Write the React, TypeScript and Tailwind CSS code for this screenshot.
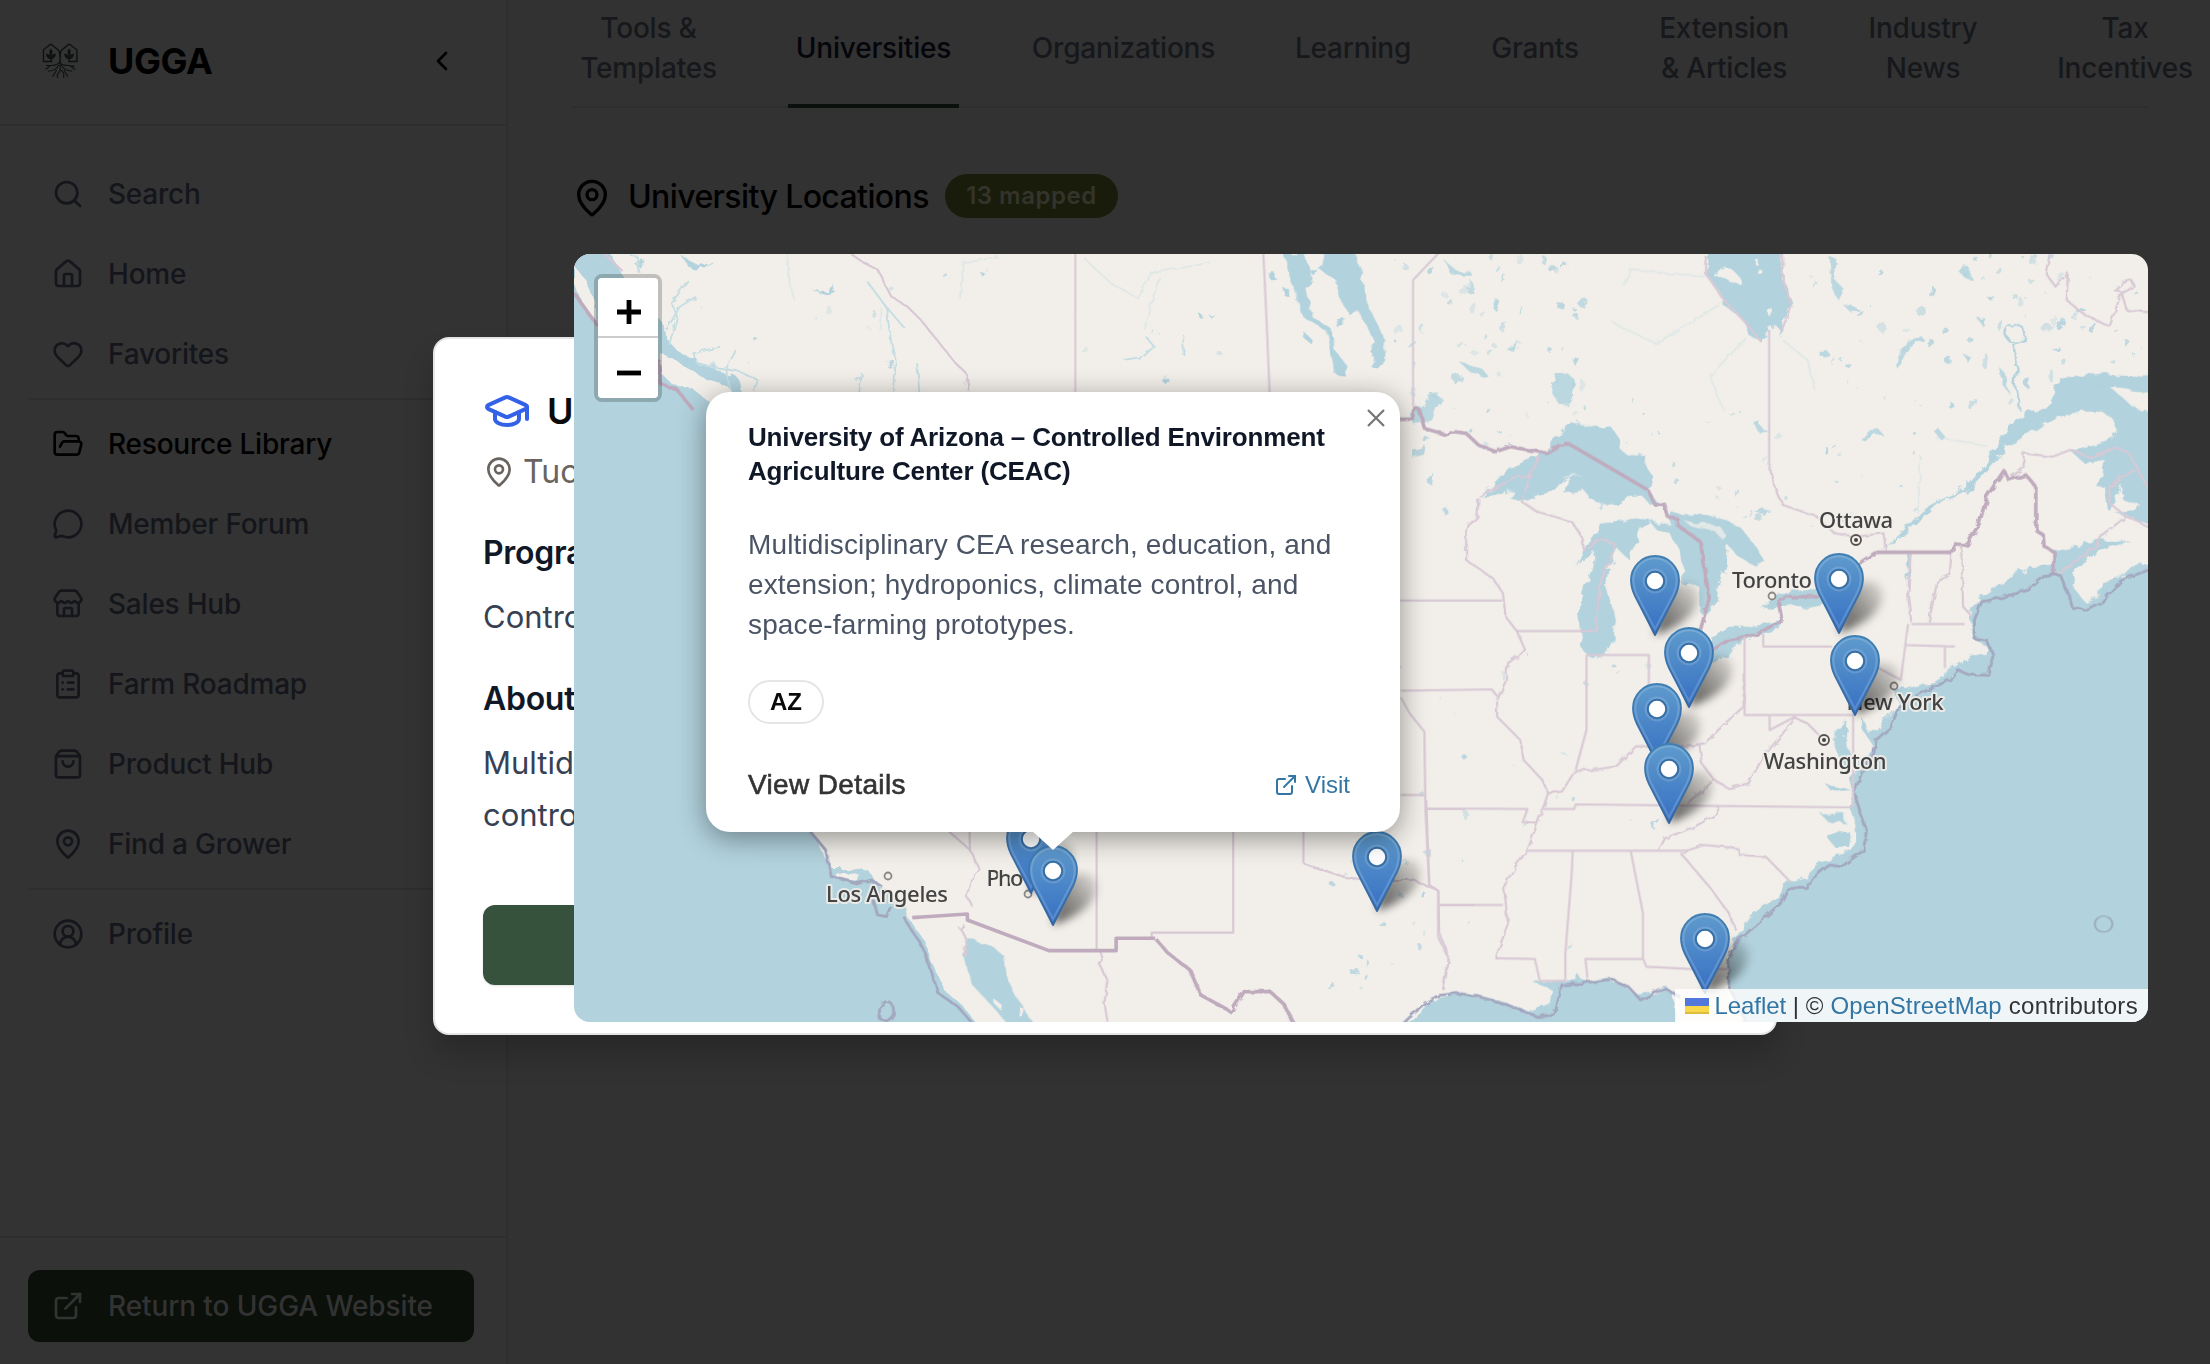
import type { ComponentType, ReactNode } from "react";
import {
  ChevronLeft, CircleUserRound, ClipboardList, ExternalLink, FolderOpen, GraduationCap,
  Heart, House, MapPin, MessageCircle, Search, ShoppingBag, Store,
} from "lucide-react";

type Icon = ComponentType<{ className?: string; strokeWidth?: number }>;

function NavItem({ icon: I, label, active }: { icon: Icon; label: string; active?: boolean }) {
  return (
    <a className={`flex h-[72px] items-center gap-6 rounded-xl pl-6 text-[28px] font-medium tracking-[-0.22px] ${active ? "text-black" : "text-[#14161b]"}`}>
      <I className="size-8 shrink-0" />
      <span>{label}</span>
    </a>
  );
}

function Logo() {
  return (
    <svg viewBox="117 130 101 107" preserveAspectRatio="none" className="h-9 w-9 shrink-0 text-[#0c120e]" fill="none" stroke="currentColor" strokeWidth="3.8">
      <path d="M146 185H121V150L142 133L164 152Q168 160 168 190M191 185H215V150L193 133L171 152Q168 158 168 172" />
      <path d="M142 146q-9 10 0 22q9-12 0-22M193 146q-9 10 0 22q9-12 0-22M128 162q12-1 14 13q2-14 14-13q-2 16-14 16q-12 0-14-16M179 162q12-1 14 13q2-14 14-13q-2 16-14 16q-12 0-14-16" fill="currentColor" stroke="none" />
      <path d="M142 160V185M193 160V185" />
      <path d="M167 185Q160 198 140 197L127 209M168 190Q176 198 196 197L210 210M168 188V212L160 224V234M168 208L178 220V234M164 195Q158 212 134 214M171 195Q178 212 202 214M158 210L147 230M178 210L190 230M145 197L128 197M190 197L209 199" strokeWidth="3" />
    </svg>
  );
}

function Sidebar() {
  return (
    <aside className="flex h-full w-[508px] shrink-0 flex-col border-r-2 border-[#2e2e2e] bg-[#333333]">
      <div className="flex h-[126px] items-center border-b-2 border-[#2e2e2e] pl-[42px] pr-12 pb-0.5">
        <Logo />
        <span className="ml-[30px] grow text-[36px] font-bold tracking-[-0.4px] text-black">UGGA</span>
        <ChevronLeft className="size-8 text-black" />
      </div>
      <nav className="flex grow flex-col gap-2 px-7 pt-8">
        <NavItem icon={Search} label="Search" />
        <NavItem icon={House} label="Home" />
        <NavItem icon={Heart} label="Favorites" />
        <div className="h-0.5 bg-[#2e2e2e]" />
        <NavItem icon={FolderOpen} label="Resource Library" active />
        <NavItem icon={MessageCircle} label="Member Forum" />
        <NavItem icon={Store} label="Sales Hub" />
        <NavItem icon={ClipboardList} label="Farm Roadmap" />
        <NavItem icon={ShoppingBag} label="Product Hub" />
        <NavItem icon={MapPin} label="Find a Grower" />
        <div className="h-0.5 bg-[#2e2e2e]" />
        <NavItem icon={CircleUserRound} label="Profile" />
      </nav>
      <div className="h-[128px] border-t-2 border-[#2e2e2e] px-7 pt-8">
        <a className="flex h-[72px] w-[446px] items-center gap-6 rounded-xl bg-[#0b100b] pl-6 text-[28px] font-medium tracking-[-0.1px] text-[#333333]">
          <ExternalLink className="size-8" />
          <span>Return to UGGA Website</span>
        </a>
      </div>
    </aside>
  );
}

const tabs = [
  { lines: ["Tools &", "Templates"], box: "w-[149px]" },
  { lines: ["Universities"], box: "w-[171px]", active: true },
  { lines: ["Organizations"], box: "w-[199px]" },
  { lines: ["Learning"], box: "w-[130px]" },
  { lines: ["Grants"], box: "w-[104px]" },
  { lines: ["Extension", "& Articles"], box: "w-[144px]" },
  { lines: ["Industry", "News"], box: "w-[124px]" },
  { lines: ["Tax", "Incentives"], box: "w-[150px]" },
];

function Tabs() {
  return (
    <div className="flex h-[108px] w-[1576px] gap-[65px] border-b-2 border-[#2e2e2e] pl-0.5">
      {tabs.map((t) => (
        <div key={t.lines[0]} className={`flex h-[108px] shrink-0 flex-col items-center justify-center whitespace-nowrap border-b-4 pb-2 text-[28px] font-medium leading-10 tracking-[-0.2px] ${t.box} ${t.active ? "border-[#0a110d] text-[#04060b]" : "border-transparent text-[#16181c]"}`}>
          {t.lines.map((l) => <span key={l}>{l}</span>)}
        </div>
      ))}
    </div>
  );
}

/* ---------- Map ---------- */

const water = "#b2d2dd";
const land = "#f2efea";

/** Small lakes scattered pseudo-randomly inside a rectangle. */
function Lakes({ x, y, w, h, n, seed, size = 4 }: { x: number; y: number; w: number; h: number; n: number; seed: number; size?: number }) {
  let s = seed;
  const r = () => (s = (s * 16807) % 2147483647) / 2147483647;
  const items = [];
  for (let i = 0; i < n; i++) {
    const cx = x + r() * w;
    const cy = y + r() * h;
    const a = 1 + r() * size;
    items.push(<ellipse key={i} cx={cx} cy={cy} rx={a * 0.5} ry={a * (0.5 + r() * 0.8)} opacity={0.3 + r() * 0.6} transform={`rotate(${Math.floor(r() * 70)} ${cx} ${cy})`} />);
  }
  return <g fill={water} filter="url(#shore)">{items}</g>;
}

function Line({ d, k = "thin" }: { d: string; k?: "thin" | "thick" | "river" | "coast" }) {
  const s = { thin: ["#d8c9d5", 2.2], thick: ["#bfabbd", 3.6], river: ["#c4dde3", 1.8], coast: ["#a3a8c0", 2.8] }[k] as [string, number];
  return <path d={d} fill="none" stroke={s[0]} strokeWidth={s[1]} strokeLinejoin="round" vectorEffect="non-scaling-stroke" />;
}

const pins = [[1031, 893], [1839, 633], [1655, 635], [1689, 707], [1855, 715], [1657, 763], [1669, 823], [1377, 911], [1053, 925], [1705, 993]];

const places = [
  { name: "Los Angeles", x: 887, y: 902, w: 122, dx: 888, dy: 876 },
  { name: "Pho", x: 1005, y: 886, w: 37, dx: 1028, dy: 894 },
  { name: "Ottawa", x: 1856, y: 528, w: 74, dx: 1856, dy: 540, capital: true },
  { name: "Toronto", x: 1772, y: 588, w: 80, dx: 1772, dy: 596 },
  { name: "New York", x: 1895, y: 710, w: 97, dx: 1894, dy: 686 },
  { name: "Washington", x: 1825, y: 769, w: 123, dx: 1824, dy: 740, capital: true },
];

function MapArt() {
  return (
    <svg viewBox="574 254 1574 768" className="absolute inset-0 h-[768px] w-[1574px]">
      <defs>
        <filter id="shore" x="574" y="254" width="1574" height="768" filterUnits="userSpaceOnUse">
          <feTurbulence type="fractalNoise" baseFrequency="0.09" numOctaves="3" seed="4" />
          <feDisplacementMap in="SourceGraphic" scale="9" />
        </filter>
        <filter id="jitter" x="574" y="254" width="1574" height="768" filterUnits="userSpaceOnUse">
          <feTurbulence type="fractalNoise" baseFrequency="0.12" numOctaves="2" seed="9" />
          <feDisplacementMap in="SourceGraphic" scale="5" />
        </filter>
        <filter id="soft" x="-50%" y="-50%" width="200%" height="200%"><feGaussianBlur stdDeviation="4.5" /></filter>
        <linearGradient id="pin" x1="0" y1="0" x2="0" y2="1"><stop offset="0" stopColor="#5f9bcd" /><stop offset="0.9" stopColor="#3a74c4" /></linearGradient>
        <linearGradient id="edge" x1="0" y1="0" x2="0" y2="1"><stop offset="0" stopColor="#4080b4" /><stop offset="1" stopColor="#3566a0" /></linearGradient>
        <linearGradient id="shade" x1="0" y1="1" x2="1" y2="0"><stop offset="0" stopColor="#000" stopOpacity="0.65" /><stop offset="0.5" stopColor="#000" stopOpacity="0.38" /><stop offset="1" stopColor="#000" stopOpacity="0.06" /></linearGradient>
      </defs>
      <rect x="574" y="254" width="1574" height="768" fill={land} />

      {/* Water bodies */}
      <g filter="url(#shore)">
        <path fill={water} d="M560 240H604L615 263L626 280L640 296L662 322L668 340L676 350L690 358L712 368L730 376L738 392L760 420L810 830L817 842L826 860L832 868L850 868L870 872L878 886L893 892L905 904L910 920L924 940L932 962L944 990L962 1005L982 1030H560Z" />
        <path fill={land} d="M660 353L672 358L690 370L708 380L728 386L740 400L720 410L704 398L692 388L672 384L660 372Z" />
        <path fill={land} d="M574 266L584 278L594 300L596 322L584 306L574 284Z" />
        <path fill={land} d="M836 874q8-4 18-1l8 4q-12 6-26 0z" />
        {/* Gulf of California */}
        <g transform="translate(780 800) scale(.4337 .3333)">
          <path fill={water} d="M430 415L470 430L490 440L515 465L520 520L540 580L590 680H530L490 620L440 550L425 470Z" />
          <path fill={land} d="M490 592L515 620L510 632L495 612ZM552 620L565 628L558 652L550 645Z" />
        </g>
        {/* Manitoba lakes */}
        <g transform="translate(570 250) scale(.5357 .3333)" fill={water}>
          <path d="M1408 0L1400 60L1430 90L1435 140L1455 195L1470 180L1490 240L1500 270L1495 350L1510 360L1522 330L1520 260L1500 200L1485 140L1475 60L1465 0Z" />
          <path d="M1330 10L1340 60L1355 130L1368 200L1410 240L1418 310L1430 375L1448 380L1452 350L1428 300L1420 235L1385 200L1375 120L1385 80L1372 10Z" />
          <path d="M1305 70h12v18h-12zM1330 110l14 10v22l-12-8zM1370 245l16 25v14l-14-16zM1380 60l20 8-12 10zM1432 205l10-8 2 30-8 12z" />
          <path d="M1176 192l6 6 4 14-8-4zM1190 190h10l-6 10zM1104 388l14-2 6 14-12 4zM120 40l20-10-8 26zM765 66l10 4-4 10zM210 20l30 24 32-6-20 14-30 0zM452 124l30 2 8-26 2 24 8 4-20 8z" />
        </g>
        {/* Eastern Canada, Great Lakes, Atlantic */}
        <g transform="translate(1390 250) scale(.4911 .3333)">
          <path fill={water} d="M648 -10L650 30L643 70L665 115L680 150L682 172L705 190L722 215L730 255L745 265L757 277L765 250L772 232L785 225L797 245L800 270L803 240L797 210L808 185L817 160L812 120L800 90L798 40L790 -10Z" />
          <path fill={land} d="M655 70Q665 48 695 60Q715 75 717 108Q700 95 680 85ZM765 185l14-8 2 12-12 6zM745 30h6v16h-6zM750 60h8v14h-6z" />
          <path fill={water} d="M185 740L240 655L300 618L320 600L330 565L350 545L370 515L420 530L450 530L462 560L470 600L485 615L522 618L520 650L535 680L528 720L545 760L530 765L515 740L490 740L465 760L440 765L405 745L395 720L355 730L360 690L388 668L355 685L335 720L290 745L262 752L245 745L250 720L215 730Z" />
          <path fill={water} d="M377 950L395 900L420 850L425 825L450 820L490 803L530 810L528 830L505 850L510 880L485 895L488 930L465 900L445 950L440 1010L450 1060L460 1110L455 1165L440 1210L410 1225L392 1200L385 1120L383 1090L398 1010L410 960L418 905L400 925L385 935Z" />
          <path fill={water} d="M530 815L570 820L575 790L640 795L690 815L712 830L735 870L760 930L745 950L705 915L688 885L685 935L670 1000L668 1060L640 1100L630 1080L630 1010L610 1000L595 1005L595 960L590 900L570 850L540 835Z" />
          <path fill={land} d="M600 812l38 8 34 8 10 26-10 8-12-20-50-16z" opacity=".75" />
          <path fill={water} d="M755 1075L790 1030L850 1020L905 1010L905 1060L860 1075L800 1065ZM655 1240L650 1200L658 1160L685 1130L735 1130L800 1108L790 1135L745 1160L700 1190L685 1220Z" />
          <path fill={water} d="M1560 375L1480 378L1440 372L1380 380L1352 410L1340 470L1300 485L1260 530L1245 570L1225 600L1210 645L1175 710L1100 765L1075 795L1040 850L1000 905L1045 857L1085 800L1125 752L1185 715L1225 650L1250 600L1290 560L1340 510L1400 485L1450 485L1475 510L1478 545L1460 575L1400 600L1385 602L1415 640L1430 625L1455 630L1450 680L1435 705L1455 710L1462 780L1500 800L1560 830Z" />
          <path fill={land} d="M1465 785L1478 740L1492 705L1490 745L1530 768L1500 790ZM1465 410L1500 415L1560 440V490L1515 475L1490 440Z" />
          <path fill={water} d="M1560 935L1510 950L1485 985L1450 1000L1440 1040L1415 1055L1390 1010L1395 960L1440 900L1510 875L1440 870L1380 895L1350 905L1350 940L1320 945L1260 985L1210 1040L1190 1060L1175 1100L1190 1130L1185 1165L1215 1185L1212 1215L1185 1215L1150 1250L1100 1290L1040 1310L1030 1325L1035 1360L1010 1400L990 1440L975 1450L960 1400L958 1430L985 1490L960 1540L935 1590L945 1640L935 1670L950 1730L945 1790L910 1820L880 1840L850 1880L800 1900L790 1940L740 1990L715 2040L700 2070L690 2130L690 2190L725 2340H1560Z" />
          <path fill={land} d="M1040 1300L1120 1270L1150 1255L1110 1290L1050 1318Z" />
          <path fill={water} d="M905 1440L930 1410L925 1470L940 1520L930 1560L905 1490ZM885 1600L940 1620L900 1625ZM890 1760L935 1740L930 1790L905 1790ZM875 1690h50v30h-30zM1052 910l10 5-4 70-6 10z" />
          <path fill={water} d="M-10 2360L60 2290L100 2240L140 2228L180 2240L240 2262L290 2282L325 2260L330 2220L290 2195L380 2190L375 2160L390 2190L450 2190L480 2210L500 2238L530 2232L560 2205L575 2230L585 2345Z" />
          <path fill={water} d="M330 400l10-25 22-4 12 14-4 60-12 22-16-8-12-30zM40 490l50-60 20 20-30 60-35 10zM45 600l28-12-4 26-24 8zM70 690l16-25-2 40zM108 780l8-6 6 20-8 6zM140 335l50 25 10 20-30-6zM230 295l40-18-20 22zM1030 340l15-55 35-30 5 12-30 30-22 60zM925 168l12-2 20 10-18 12zM1105 540l12-4 12 22-8 10zM740 515l12-2 6 24 18 8-26 2zM870 300l14-6 10 16-8 12-12-6zM740 785l20-10 16 12-20 4zM960 570l30-40 18 30-20-8-14 26zM895 20l15 8-5 60 20 30-12 34-14-40zM1240 350l12 20 8 60-14-28zM1195 205l16-4v34zM1165 310l20 14-6 18zM1155 60l20-14 15 50-20-14zM110 30l25 32 28 2 2 10-40 0z" opacity=".85" />
          <path fill="none" stroke={water} strokeWidth="5" d="M1253 250q2-26 20-26q20 4 20 26q-4 28-20 30q-18-4-20-30M1272 284l4 60-4 60 12 80" />
        </g>
      </g>
      <Lakes x={1395} y={256} w={190} h={190} n={65} seed={11} size={5} />
      <Lakes x={1810} y={256} w={330} h={150} n={75} seed={77} size={5} />
      <Lakes x={1600} y={400} w={330} h={130} n={45} seed={29} size={3.5} />
      <Lakes x={690} y={258} w={560} h={130} n={22} seed={53} size={4} />
      <Lakes x={1400} y={640} w={280} h={350} n={24} seed={31} size={3} />
      <Lakes x={1330} y={840} w={110} h={150} n={22} seed={91} size={3.5} />

      {/* Rivers and offshore boundaries */}
      <g filter="url(#jitter)">
        <g transform="translate(570 250) scale(.5357 .3333)">
          <Line k="river" d="M185 285L200 200L190 160L220 90M180 240L205 170L235 140M130 70L125 20L110 12M240 345L310 360L350 390L345 426M240 345L230 310L280 290M300 420L290 360L310 300M555 95L590 170L600 280L608 330L605 426M590 170L625 235M540 426L545 370M648 340L652 426M1035 330L1070 320L1090 290L1075 260M1145 255v60" />
          <path d="M300 370q20 10 20 56h-18z" fill={water} />
          <path d="M185 285l30 35 25 10-10 12-30-10z" fill={water} />
          <g opacity=".4"><Line k="river" d="M405 12L410 100L420 150M960 25L1010 100L1060 145L1085 70L1195 38M730 150L735 40L800 20M580 170L578 240M1100 80L1070 240" /></g>
          <Line k="thick" d="M8 130L50 225M165 330L168 400L200 420L230 480" />
          <Line d="M65 12L100 66" />
          <Line d="M525 12L545 35L575 60L590 110L600 140L630 170L655 210L690 280L720 340L740 370L745 426" />
        </g>
        <g transform="translate(1390 250) scale(.4911 .3333)">
          <g opacity=".4"><Line k="river" d="M475 105L490 60L560 70L645 80M450 215L540 280L600 230L680 155M725 265L650 380L680 480M800 270L850 330L865 420M1110 560L1220 590M1075 790L1080 640" /></g>
          <Line k="thick" d="M20 508H45L50 470L60 480L70 535L115 555L130 545L155 550L180 585L215 605L245 590L320 610L360 578" />
          <Line k="thick" d="M525 720L540 765L557 760L565 800L585 805L585 825L632 875L650 1045L632 1140M650 1205L690 1170L745 1155L798 1110L790 1050L810 1040H870L900 1010L960 935L990 907M1143 907L1150 882L1175 885L1200 820L1215 740L1250 662L1260 690L1295 675L1315 710V840L1330 855L1332 890L1352 905V975" />
          <Line k="coast" d="M1545 960L1490 990L1450 1055L1415 1080L1390 1075L1385 1050L1365 975H1335L1300 1020L1240 1045L1205 1055L1190 1110V1165L1215 1170L1228 1215L1220 1275H1180L1155 1260L1140 1290L1080 1330L1035 1375L1020 1430L990 1470L985 1510L960 1570L945 1630L970 1740L965 1800L920 1850L895 1845L860 1885L850 1915H810L795 1960L750 2020L710 2070L690 2130V2210L725 2315" />
          <Line d="M183 740L255 680H285L305 618M285 680L268 755L300 785L370 815L390 860L395 900L430 865L460 885L430 990L420 1100V1143M180 745L178 800L155 835V930L210 985L230 1030L235 1100L258 1143L275 1200L240 1240L235 1295L218 1350L218 1400L265 1470L272 1530L310 1590L322 1630L310 1680L280 1800L255 1850L232 1910L240 2020L215 2125" />
          <Line d="M1265 680L1290 655V610L1350 620L1385 600L1430 625L1475 590L1505 610L1545 720M1520 655L1465 710V760L1500 800L1445 860L1440 885L1360 970M1500 800L1545 830M1345 0L1335 70L1355 110L1380 70L1378 150L1410 190L1465 230L1490 125L1475 120L1490 100L1510 90L1515 110L1490 130L1500 180L1545 187M645 20L643 70L680 150L722 215L757 277M798 0L800 90L817 160L797 245" />
          <Line d="M772 640L780 700L800 765L870 800L905 850L950 860L1005 850L1010 905M1060 907L1055 1040L1062 1120M1143 907L1140 970L1115 990L1105 1060L1097 1115M1163 885L1167 1070L1185 1100" />
          <Line d="M322 1630L350 1625L378 1560L410 1560L460 1550L500 1490L545 1485L600 1490L640 1480L690 1410L720 1370V1270M547 1802L560 1765L620 1730L668 1690V1668M605 1802L640 1785L708 1795L712 1815L765 1820L815 1895M605 1802L595 1815L650 1910L690 1990L705 2042M630 1485L635 1540L660 1590L605 1660M660 1590L690 1615L730 1600L760 1520L800 1450L825 1405L850 1420L870 1450M98 2060L120 2130L108 2220" />
          <Line k="coast" d="M20 2330L70 2260L100 2236L140 2230L180 2240L230 2260L300 2300L335 2295L350 2205L390 2200L450 2188L485 2210L510 2250L560 2215L590 2240" />
        </g>
        <g transform="translate(780 800) scale(.4337 .3333)">
          <Line k="coast" d="M68 92L105 150L118 230L180 250L210 240L235 260M285 350L300 385L325 430L345 500L365 580L410 620L450 680M215 300L225 345L245 350L255 320" />
          <Line k="coast" d="M245 604q20 2 16 40q-12 28-30 14q-8-40 14-54" />
          <Line d="M1207 190L1240 205L1310 235L1340 240H1460L1515 270M445 320L430 290L440 240L460 210L438 150L390 95M1520 400L1540 460L1530 570M740 452L745 475L735 490L755 540L748 610L755 665M425 375L415 385L430 415L425 470" />
          <Line k="thick" d="M865 415L895 460L945 510L970 585L1040 635L1070 575H1130L1160 610L1185 670" />
        </g>
      </g>

      {/* Straight boundaries */}
      <g transform="translate(570 250) scale(.5357 .3333)"><Line d="M943 0V426M1294 0L1300 200L1306 426" /></g>
      <g transform="translate(1390 250) scale(.4911 .3333)">
        <Line d="M105 0L47 90V470M772 240V640M20 1052H228M258 1143H420M1062 1122H1170M1050 1185L1150 1190M760 1150V1190H900M1055 1122L1040 1290L990 1250M1130 1190V1255" />
        <Line k="thick" d="M360 578L525 720M990 907H1143" />
      </g>
      <g transform="translate(1390 620) scale(.4911 .3333)">
        <Line d="M22 212L207 208L222 235M22 232L40 280L70 335L72 565L280 567L270 607H298M22 525H72M72 565L80 800M98 812V855H230M98 855V950M215 1015L295 1017L305 1083H357M400 105V330L378 450M400 105H527V210M310 567H375L378 553L670 558L940 562M280 692H605M372 692L370 760L357 1000V1083M490 692L515 880V1015L522 1040L610 1047H690M515 1017H398L402 1075M722 50V285H943V560M773 285V330L825 290" />
        <ellipse cx="1453" cy="912" rx="18" ry="24" fill={water} stroke="#9ba9c0" strokeWidth="4" />
      </g>
      <g transform="translate(780 800) scale(.4337 .3333)">
        <Line d="M437 95L438 150M730 80V450M1045 80V398H857V415M1207 80V190M1490 0L1497 255L1518 272L1520 400M1488 27H1580M1518 315H1600" />
        <Line k="thick" d="M305 353L432 342V360L620 452H775V415H865" />
      </g>

      {/* Place names */}
      {places.map((p) => (
        <g key={p.name}>
          <circle cx={p.dx} cy={p.dy} r={p.capital ? 5 : 3.5} fill={land} stroke={p.capital ? "#55524f" : "#8a8682"} strokeWidth="1.8" />
          {p.capital && <circle cx={p.dx} cy={p.dy} r="2" fill="#444" />}
          <text x={p.x} y={p.y} textAnchor="middle" textLength={p.w} className="fill-[#434343] font-['Noto_Sans'] text-[22px] font-medium" stroke={land} strokeWidth="4" strokeOpacity=".85" paintOrder="stroke" strokeLinejoin="round">{p.name}</text>
        </g>
      ))}

      {/* Marker shadows, then markers */}
      {pins.map(([x, y]) => (
        <path key={`s${x}`} transform={`translate(${x} ${y})`} filter="url(#soft)" fill="url(#shade)" d="M0 0L8 -40Q22 -56 38 -50Q48 -42 40 -26Q30 -10 0 0Z" />
      ))}
      {pins.map(([x, y]) => (
        <g key={`p${x}`} transform={`translate(${x} ${y - 79})`}>
          <path d="M0 79L-20 40Q-24 32 -24 24A24 24 0 0 1 24 24Q24 32 20 40Z" fill="url(#pin)" stroke="url(#edge)" strokeWidth="1.8" strokeLinejoin="round" />
          <path d="M0 73L-18 39Q-21.7 31 -21.7 24A21.7 21.7 0 0 1 21.7 24Q21.7 31 18 39Z" fill="none" stroke="#fff" strokeOpacity=".16" strokeWidth="2" />
          <circle cy="25" r="9.2" fill="#fff" stroke="#376fa5" strokeWidth="2" />
          <circle cy="25" r="11.4" fill="none" stroke="#fff" strokeOpacity=".14" strokeWidth="2" />
        </g>
      ))}
    </svg>
  );
}

function ZoomControl() {
  return (
    <div className="absolute left-5 top-5 flex w-[68px] flex-col rounded-lg border-4 border-black/20 bg-clip-padding">
      <button className="flex h-[60px] items-center justify-center rounded-t border-b-2 border-[#cccccc] bg-white" aria-label="Zoom in">
        <svg viewBox="0 0 26 26" className="ml-0.5 mt-[10px] size-[26px]" stroke="#000" strokeWidth="4.8"><path d="M1 13H25M13 1V25" /></svg>
      </button>
      <button className="flex h-[60px] items-center justify-center rounded-b bg-white" aria-label="Zoom out">
        <svg viewBox="0 0 26 26" className="ml-0.5 mt-[9px] size-[26px]" stroke="#000" strokeWidth="4.8"><path d="M1 13H25" /></svg>
      </button>
    </div>
  );
}

function Popup() {
  return (
    <div className="absolute left-[132px] top-[138px] h-[440px] w-[694px] rounded-[24px] bg-white px-[42px] pt-7 font-['Liberation_Sans',sans-serif] shadow-[0_6px_28px_rgba(0,0,0,0.4)]">
      <svg viewBox="0 0 18 18" className="absolute right-[15px] top-[17px] size-[18px]" stroke="#757575" strokeWidth="2.2"><path d="M1 1L17 17M17 1L1 17" /></svg>
      <h3 className="whitespace-nowrap text-[26px] font-bold leading-[34px] tracking-[-0.16px] text-[#101828]">
        University of Arizona – Controlled Environment<br />Agriculture Center (CEAC)
      </h3>
      <p className="mt-[37px] whitespace-nowrap text-[28px] leading-10 tracking-[0.13px] text-[#4a5465]">
        Multidisciplinary CEA research, education, and<br />extension; hydroponics, climate control, and<br />space-farming prototypes.
      </p>
      <span className="mt-[35px] flex h-11 w-[76px] items-center justify-center rounded-full border-2 border-[#e5e5e5] text-[24px] font-bold text-[#0a0a0a]">AZ</span>
      <div className="mt-[41px] flex h-10 items-center justify-between pr-2">
        <span className="text-[28px] tracking-[0.36px] text-[#333333] [-webkit-text-stroke:0.6px_#333333]">View Details</span>
        <a className="flex items-center gap-[7px] text-[24px] text-[#3476a3]"><ExternalLink className="size-6" /><span>Visit</span></a>
      </div>
      <svg viewBox="0 0 44 20" className="absolute left-[325px] top-full -mt-0.5 h-5 w-11" fill="#fff"><path d="M0 0H44L22 20Z" /></svg>
    </div>
  );
}

function MapPanel() {
  return (
    <div className="relative z-20 mt-8 h-[768px] w-[1574px] overflow-hidden rounded-2xl">
      <MapArt />
      <ZoomControl />
      <Popup />
      <div className="absolute bottom-0 right-0 flex h-[33px] items-center whitespace-pre bg-white/80 pl-2.5 pr-[10px] font-['Liberation_Sans',sans-serif] text-[24px] text-[#333333]">
        <span className="mr-[6px] flex h-4 w-6 flex-col"><span className="h-2 bg-[#5178da]" /><span className="h-[6px] bg-[#f8d84a]" /><span className="h-[2px] bg-[#dcbe3c]" /></span>
        <span className="tracking-[-0.1px] text-[#3476a3]">Leaflet</span>
        <span className="tracking-[0.1px]"> | © </span>
        <span className="tracking-[0.15px] text-[#3476a3]">OpenStreetMap</span>
        <span className="tracking-[0.32px]"> contributors</span>
      </div>
    </div>
  );
}

/** One line of dialog text, clipped to its column. */
function Row({ children, className }: { children: ReactNode; className: string }) {
  return <div className={`w-[91px] overflow-hidden whitespace-nowrap ${className}`}>{children}</div>;
}

function DetailsDialog() {
  return (
    <div className="absolute left-[433px] top-[337px] z-10 h-[698px] w-[1344px] overflow-hidden rounded-2xl border-2 border-[#e5e5e5] bg-white pl-12 shadow-[0_20px_30px_rgba(0,0,0,0.2)]">
      <Row className="mt-[48px] flex h-12 items-center gap-[16px] text-[36px] font-semibold text-[#0a0a0a]">
        <GraduationCap className="size-12 shrink-0 text-[#3361e8]" />
        <span>University</span>
      </Row>
      <Row className="mt-[13px] flex h-12 items-center gap-2 text-[32px] text-[#69645f]"><MapPin className="size-8 shrink-0" /><span>Tucson</span></Row>
      <Row className="mt-[33px] h-12 text-[32px] font-semibold leading-[48px] tracking-[-0.3px] text-[#101828]">Programs</Row>
      <Row className="mt-[14px] h-[52px] text-[31px] leading-[52px] text-[#364153]">Controlled</Row>
      <Row className="mt-8 h-12 text-[32px] font-semibold leading-[48px] tracking-[-0.3px] text-[#101828]">About</Row>
      <Row className="mt-[14px] h-[52px] text-[31px] leading-[52px] text-[#364153]">Multidisciplinary</Row>
      <Row className="h-[52px] text-[31px] leading-[52px] text-[#364153]">controlled</Row>
      <div className="mt-[64px] h-20 w-[1244px] rounded-xl bg-[#36523d] shadow-sm" />
    </div>
  );
}

export default function App() {
  return (
    <div className="relative flex h-[1364px] w-[2210px] overflow-hidden bg-[#323232] font-[Inter,sans-serif]">
      <Sidebar />
      <main className="flex grow flex-col pl-16">
        <Tabs />
        <div className="ml-0.5 mt-[66px] flex h-[48px] items-center text-[32px] font-medium text-black">
          <MapPin className="-ml-[2px] size-10" />
          <span className="-mt-0.5 ml-4 tracking-[-0.6px]">University Locations</span>
          <span className="ml-[16px] -mt-1 flex h-11 w-[173px] items-center justify-center rounded-full bg-[#1a1c0b] text-[24px] font-semibold tracking-[0.5px] text-[#33342b]">13 mapped</span>
        </div>
        <div className="ml-0.5"><MapPanel /></div>
      </main>
      <DetailsDialog />
    </div>
  );
}
